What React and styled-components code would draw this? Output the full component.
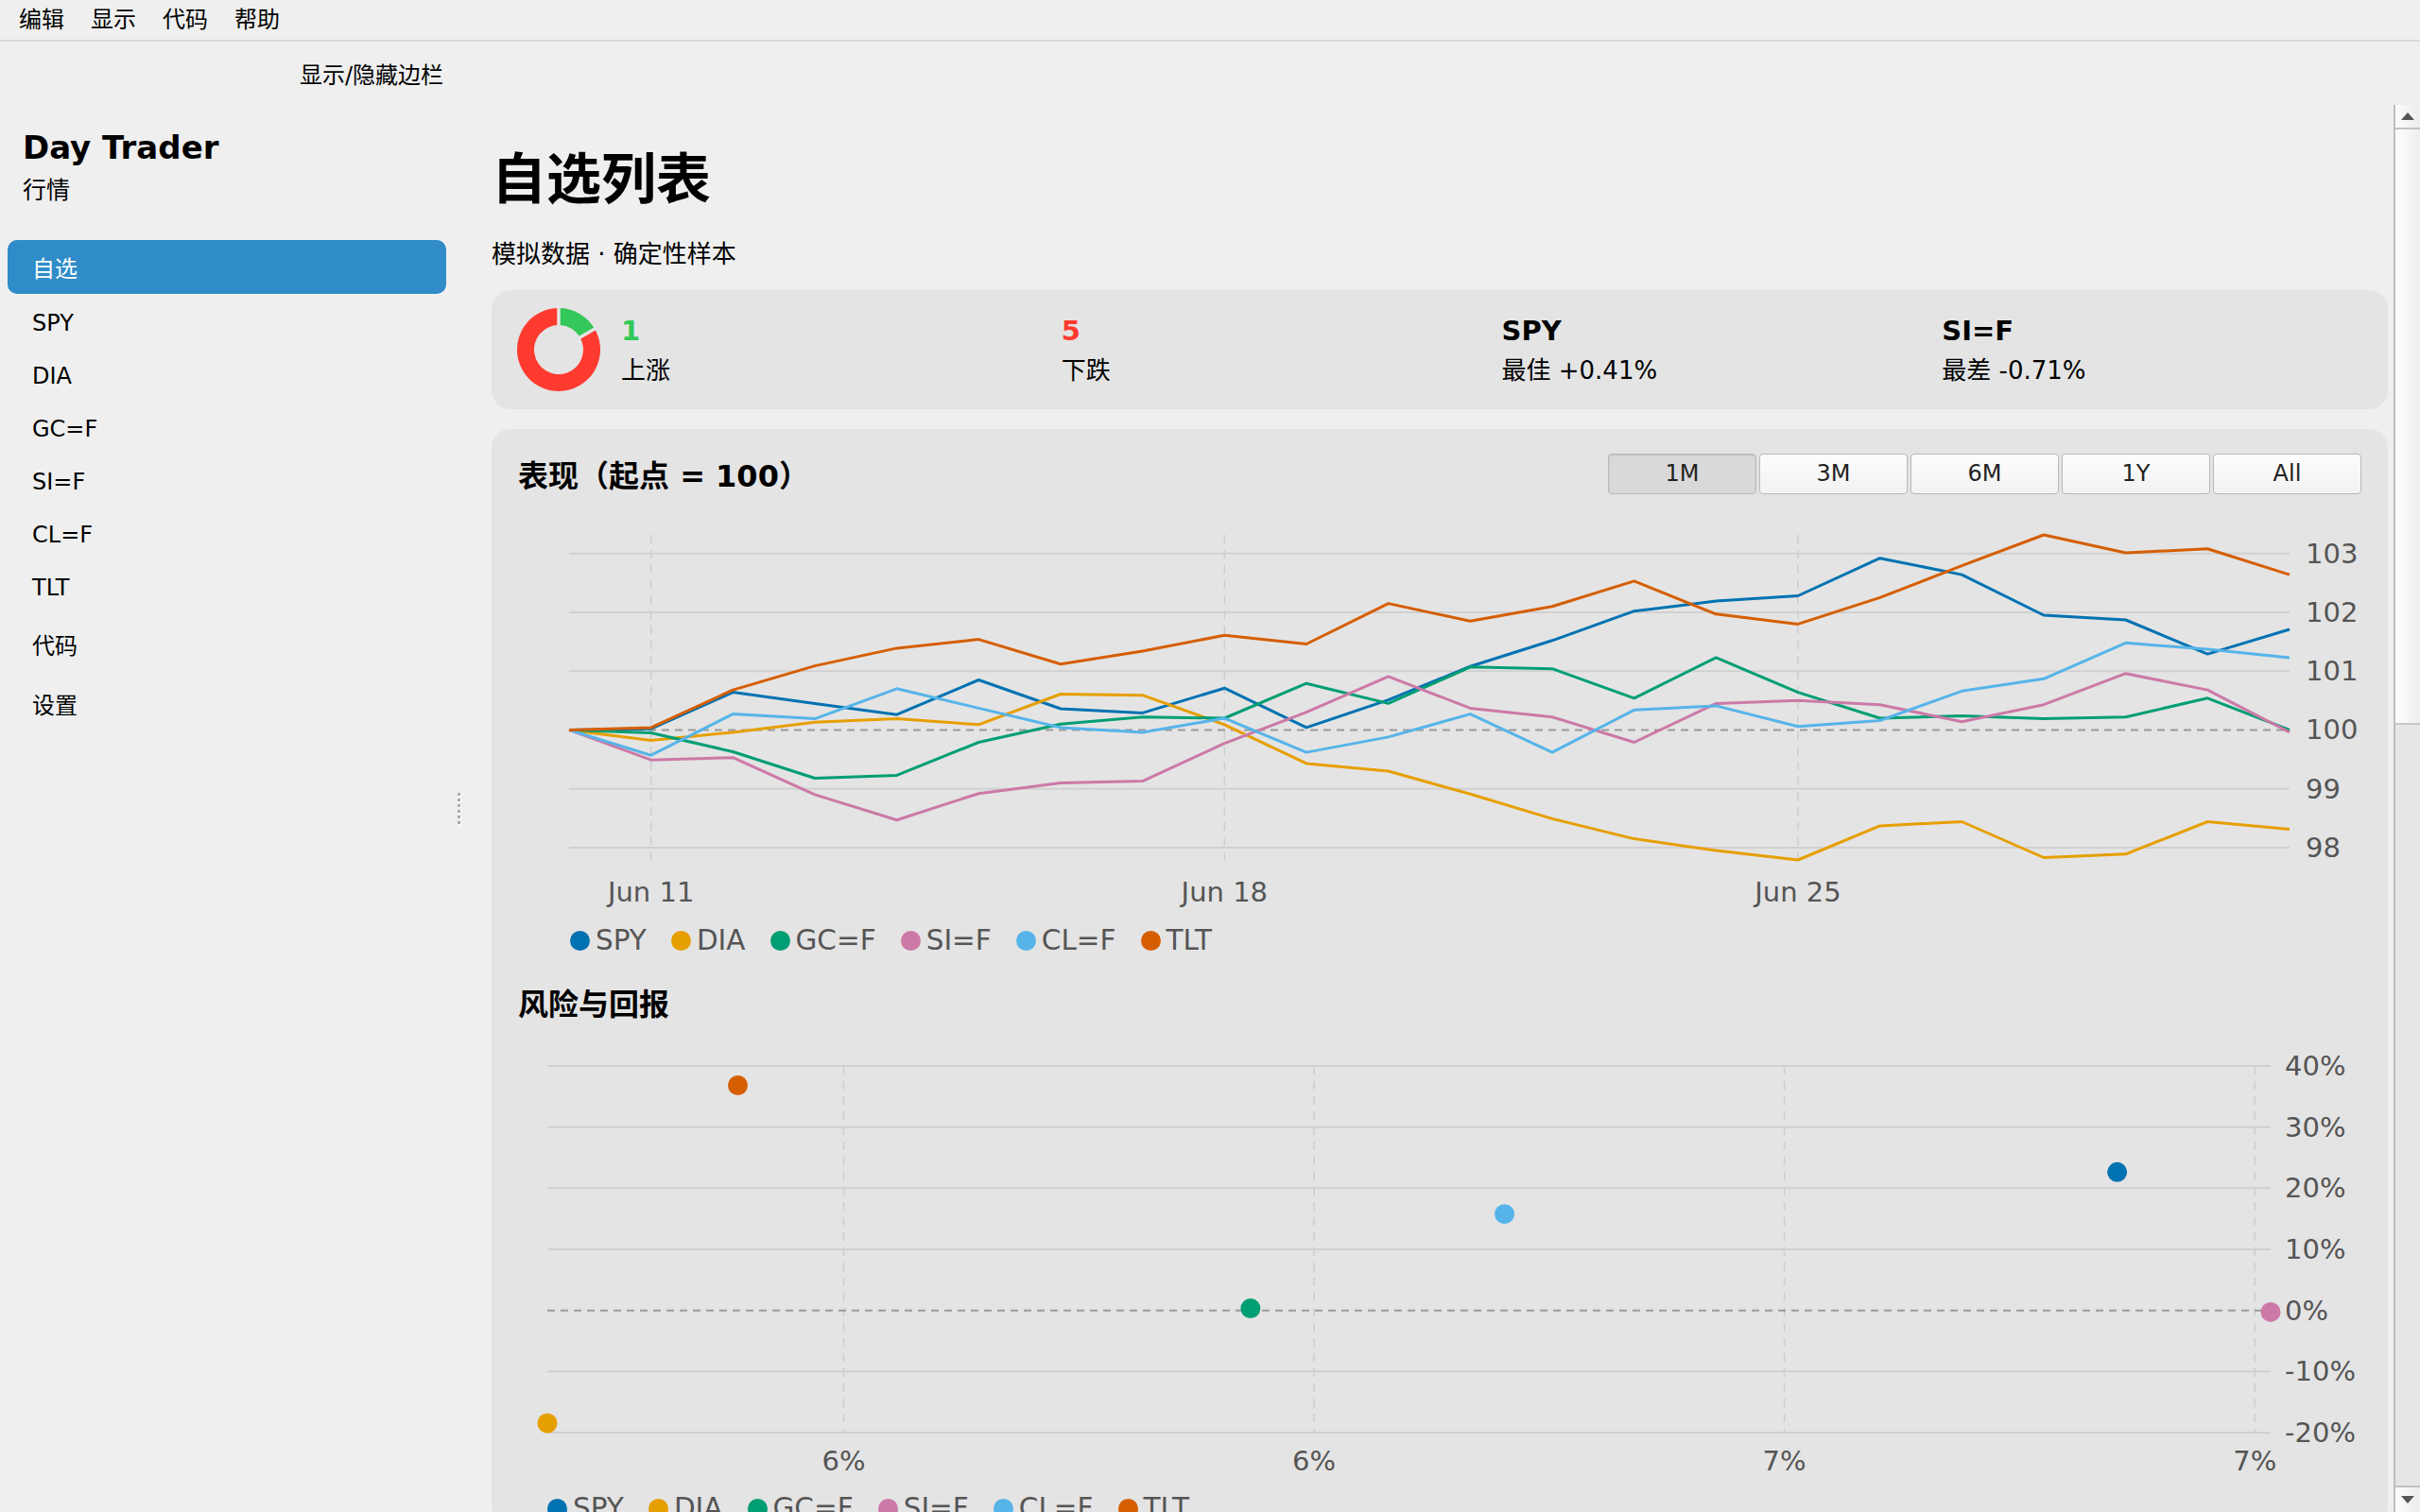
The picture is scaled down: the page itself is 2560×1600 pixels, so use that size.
import React from "react";
import styled, { createGlobalStyle } from "styled-components";

const FONT = `"DejaVu Sans", "Noto Sans CJK SC", sans-serif`;

const GlobalStyle = createGlobalStyle`
  * { box-sizing: border-box; }
  html, body { margin: 0; padding: 0; }
  body {
    background: #efefef;
    color: #000;
    font-family: ${FONT};
    overflow: hidden;
  }
`;

const SERIES = [
  {
    name: "SPY",
    color: "#0072b2",
    values: [100, 100.02, 100.64, 100.45, 100.26, 100.85, 100.36, 100.29, 100.71, 100.04, 100.51, 101.08, 101.52, 102.02, 102.19, 102.28, 102.92, 102.64, 101.95, 101.87, 101.29, 101.71],
  },
  {
    name: "DIA",
    color: "#e69f00",
    values: [100, 99.82, 99.96, 100.13, 100.19, 100.09, 100.61, 100.59, 100.09, 99.43, 99.3, 98.91, 98.49, 98.15, 97.95, 97.79, 98.37, 98.44, 97.83, 97.89, 98.44, 98.31],
  },
  {
    name: "GC=F",
    color: "#009e73",
    values: [100, 99.95, 99.63, 99.18, 99.23, 99.79, 100.1, 100.22, 100.2, 100.79, 100.45, 101.07, 101.04, 100.54, 101.23, 100.64, 100.2, 100.24, 100.19, 100.22, 100.54, 100.0],
  },
  {
    name: "SI=F",
    color: "#cc79a7",
    values: [100, 99.49, 99.53, 98.9, 98.47, 98.92, 99.1, 99.13, 99.77, 100.3, 100.91, 100.37, 100.22, 99.79, 100.45, 100.5, 100.43, 100.14, 100.43, 100.96, 100.68, 99.96],
  },
  {
    name: "CL=F",
    color: "#56b4e9",
    values: [100, 99.57, 100.27, 100.19, 100.7, 100.37, 100.04, 99.96, 100.2, 99.62, 99.88, 100.27, 99.62, 100.34, 100.41, 100.06, 100.16, 100.66, 100.87, 101.48, 101.37, 101.23],
  },
  {
    name: "TLT",
    color: "#d55e00",
    values: [100, 100.04, 100.68, 101.09, 101.39, 101.54, 101.12, 101.34, 101.61, 101.46, 102.15, 101.85, 102.1, 102.53, 101.97, 101.8, 102.25, 102.79, 103.316, 103.01, 103.08, 102.64],
  },
];

// annualised risk / return, in percent
const RISK = {
  SPY: { risk: 6.883, ret: 22.63 },
  DIA: { risk: 5.548, ret: -18.45 },
  "GC=F": { risk: 6.146, ret: 0.32 },
  "SI=F": { risk: 7.0135, ret: -0.27 },
  "CL=F": { risk: 6.362, ret: 15.77 },
  TLT: { risk: 5.71, ret: 36.83 },
};

const NAV = ["SPY", "DIA", "GC=F", "SI=F", "CL=F", "TLT", "代码", "设置"];
const RANGES = ["1M", "3M", "6M", "1Y", "All"];

/* ---------- shell ---------- */

const Shell = styled.div`
  height: 100vh;
  display: flex;
  flex-direction: column;
`;

const MenuBar = styled.div`
  height: 44px;
  flex: none;
  display: flex;
  align-items: center;
  padding-left: 6px;
  border-bottom: 2px solid #d8d8d8;
`;

const MenuItem = styled.span`
  padding: 0 14px;
  font-size: 24px;
  line-height: 42px;
`;

const ToolRow = styled.div`
  height: 67px;
  flex: none;
  display: flex;
  align-items: center;
`;

const ToggleButton = styled.button`
  width: 480px;
  padding: 0 11px 0 0;
  border: 0;
  background: transparent;
  font: 24px ${FONT};
  color: #000;
  text-align: right;
`;

const Body = styled.div`
  flex: 1;
  min-height: 0;
  display: flex;
`;

/* ---------- sidebar ---------- */

const Sidebar = styled.aside`
  width: 480px;
  flex: none;
  padding: 25px 8px 0;
`;

const Brand = styled.div`
  padding-left: 16px;
`;

const BrandName = styled.div`
  font-size: 34px;
  font-weight: bold;
`;

const BrandSub = styled.div`
  margin-top: 5px;
  font-size: 25px;
`;

const Nav = styled.nav`
  margin-top: 34px;
  display: flex;
  flex-direction: column;
`;

const NavItem = styled.div`
  margin: 3px 0;
  padding: 11px 26px;
  font-size: 24px;
  border-radius: 10px;
  color: ${(p) => (p.$active ? "#fff" : "#000")};
  background: ${(p) => (p.$active ? "#308cc8" : "transparent")};
`;

const Splitter = styled.div`
  width: 10px;
  flex: none;
  display: flex;
  flex-direction: column;
  align-items: center;
  justify-content: center;
  gap: 3px;
`;

const GripDot = styled.span`
  width: 3px;
  height: 3px;
  background: #aaa;
  box-shadow: 1px 1px 0 #fff;
`;

/* ---------- scrollbar ---------- */

const ScrollBar = styled.div`
  width: 28px;
  flex: none;
  display: flex;
  flex-direction: column;
  border-left: 2px solid #bdbdbd;
  background: #e6e6e6;
`;

const ScrollArrow = styled.div`
  height: ${(p) => (p.$down ? 28 : 26)}px;
  flex: none;
  display: flex;
  align-items: center;
  justify-content: center;
  background: linear-gradient(to right, #fcfcfc, #ececec);
  border-top: ${(p) => (p.$down ? "2px solid #c2c2c2" : "0")};
  border-bottom: ${(p) => (p.$down ? "0" : "2px solid #c2c2c2")};

  &::after {
    content: "";
    border-left: 7px solid transparent;
    border-right: 7px solid transparent;
    border-bottom: ${(p) => (p.$down ? "0" : "8px solid #555")};
    border-top: ${(p) => (p.$down ? "8px solid #555" : "0")};
  }
`;

const ScrollThumb = styled.div`
  height: 630px;
  flex: none;
  background: linear-gradient(to right, #fefefe, #ededed);
  border-bottom: 2px solid #c8c8c8;
`;

const ScrollTrack = styled.div`
  flex: 1;
`;

/* ---------- main ---------- */

const Main = styled.main`
  flex: 1;
  min-width: 0;
  overflow: hidden;
  padding: 32px 6px 0 30px;
`;

const PageTitle = styled.h1`
  margin: 0;
  font-size: 58px;
  font-weight: bold;
  line-height: normal;
`;

const Subtitle = styled.div`
  margin-top: 21px;
  font-size: 26px;
`;

const Card = styled.section`
  margin-top: ${(p) => p.$top}px;
  background: #e4e4e4;
  border-radius: 20px;
`;

const SummaryCard = styled(Card)`
  height: 126px;
  display: flex;
  align-items: center;
  gap: 22px;
  padding: 0 6px 0 27px;
`;

const StatGrid = styled.div`
  flex: 1;
  display: grid;
  grid-template-columns: repeat(4, 1fr);
`;

const Stat = styled.div`
  display: flex;
  flex-direction: column;
  gap: 4px;
`;

const StatValue = styled.div`
  font-size: 29px;
  font-weight: bold;
  color: ${(p) => p.$color || "#000"};
`;

const StatLabel = styled.div`
  font-size: 26px;
`;

const ChartCard = styled(Card)`
  padding: 24px 28px 0;
`;

const CardHeader = styled.div`
  display: flex;
  align-items: center;
  justify-content: space-between;
`;

const SectionTitle = styled.h2`
  margin: ${(p) => p.$top || 0}px 0 0;
  font-size: 32px;
  font-weight: bold;
  line-height: normal;
`;

const RangeGroup = styled.div`
  display: flex;
  gap: 3px;
`;

const RangeButton = styled.button`
  width: 157px;
  height: 43px;
  padding: 0;
  font: 24px ${FONT};
  color: #222;
  border: 1.5px solid #b8b8b8;
  border-radius: 4px;
  background: ${(p) => (p.$active ? "#d9d9d9" : "linear-gradient(#fdfdfd, #f2f2f2)")};
  box-shadow: ${(p) => (p.$active ? "inset 0 1px 2px rgba(0,0,0,0.12)" : "none")};
`;

const ChartSvg = styled.svg`
  display: block;
  width: 100%;
  margin-top: ${(p) => p.$top}px;
  font-family: ${FONT};

  text {
    fill: #555;
    font-size: 29px;
  }
`;

const Legend = styled.div`
  display: flex;
  align-items: center;
  gap: 26px;
  margin-top: ${(p) => p.$top}px;
  padding-left: ${(p) => p.$indent}px;
  font-size: 29.5px;
  color: #555;
`;

const LegendItem = styled.span`
  display: inline-flex;
  align-items: center;
  gap: 6px;
`;

const LegendDot = styled.span`
  width: 21px;
  height: 21px;
  border-radius: 50%;
  background: ${(p) => p.$color};
`;

/* ---------- drawings ---------- */

function Donut({ up, down }) {
  const c = 44;
  const R = 44;
  const r = 26;
  const split = (up / (up + down)) * 360;
  const pt = (deg, rad) => {
    const t = (deg * Math.PI) / 180;
    return `${(c + rad * Math.sin(t)).toFixed(2)} ${(c - rad * Math.cos(t)).toFixed(2)}`;
  };
  const sector = (a0, a1) => {
    const large = a1 - a0 > 180 ? 1 : 0;
    return `M ${pt(a0, R)} A ${R} ${R} 0 ${large} 1 ${pt(a1, R)} L ${pt(a1, r)} A ${r} ${r} 0 ${large} 0 ${pt(a0, r)} Z`;
  };
  return (
    <svg width="88" height="88" viewBox="0 0 88 88">
      <path d={sector(0, split)} fill="#34c759" />
      <path d={sector(split, 359.99)} fill="#ff3b30" />
      {[0, split].map((a) => {
        const t = (a * Math.PI) / 180;
        return (
          <line
            key={a}
            x1={c}
            y1={c}
            x2={c + 46 * Math.sin(t)}
            y2={c - 46 * Math.cos(t)}
            stroke="#e4e4e4"
            strokeWidth="3.5"
          />
        );
      })}
    </svg>
  );
}

function LineChart() {
  const left = 54;
  const right = 1874;
  const top = 36;
  const bottom = 380;
  const all = SERIES.flatMap((s) => s.values);
  const min = Math.min(...all);
  const max = Math.max(...all);
  const n = SERIES[0].values.length - 1;
  const x = (i) => left + (i * (right - left)) / n;
  const y = (v) => top + ((max - v) / (max - min)) * (bottom - top);
  const ticks = [98, 99, 100, 101, 102, 103];
  const dates = [
    [1, "Jun 11"],
    [8, "Jun 18"],
    [15, "Jun 25"],
  ];

  return (
    <ChartSvg $top={6} viewBox="0 0 1950 440">
      {dates.map(([i]) => (
        <line key={i} x1={x(i)} x2={x(i)} y1={top} y2={bottom} stroke="#cdcdcd" strokeWidth="1.5" strokeDasharray="9 7" />
      ))}
      {ticks.map((t) => (
        <g key={t}>
          <line
            x1={left}
            x2={right}
            y1={y(t)}
            y2={y(t)}
            stroke={t === 100 ? "#9a9a9a" : "#d0d0d0"}
            strokeWidth="2"
            strokeDasharray={t === 100 ? "8 6" : undefined}
          />
          <text x={1891} y={y(t)} dominantBaseline="central">
            {t}
          </text>
        </g>
      ))}
      {SERIES.map((s) => (
        <polyline
          key={s.name}
          fill="none"
          stroke={s.color}
          strokeWidth="3"
          strokeLinejoin="round"
          points={s.values.map((v, i) => `${x(i).toFixed(1)},${y(v).toFixed(1)}`).join(" ")}
        />
      ))}
      {dates.map(([i, label]) => (
        <text key={label} x={x(i)} y={414} textAnchor="middle" dominantBaseline="central">
          {label}
        </text>
      ))}
    </ChartSvg>
  );
}

function ScatterChart() {
  const left = 31;
  const right = 1854;
  const top = 33;
  const bottom = 421;
  const risks = SERIES.map((s) => RISK[s.name].risk);
  const rMin = Math.min(...risks);
  const rMax = Math.max(...risks);
  const x = (r) => left + ((r - rMin) / (rMax - rMin)) * (right - left);
  const y = (p) => top + ((40 - p) / 60) * (bottom - top);
  const yTicks = [40, 30, 20, 10, 0, -10, -20];
  const xTicks = [5.8, 6.2, 6.6, 7.0];

  return (
    <ChartSvg $top={12} viewBox="0 0 1950 475">
      {xTicks.map((t) => (
        <line key={t} x1={x(t)} x2={x(t)} y1={top} y2={bottom} stroke="#cdcdcd" strokeWidth="1.5" strokeDasharray="9 7" />
      ))}
      {yTicks.map((t) => (
        <g key={t}>
          <line
            x1={left}
            x2={right}
            y1={y(t)}
            y2={y(t)}
            stroke={t === 0 ? "#9a9a9a" : "#d0d0d0"}
            strokeWidth="2"
            strokeDasharray={t === 0 ? "8 6" : undefined}
          />
          <text x={1869} y={y(t)} dominantBaseline="central">
            {t}%
          </text>
        </g>
      ))}
      {xTicks.map((t) => (
        <text key={t} x={x(t)} y={451} textAnchor="middle" dominantBaseline="central">
          {t.toFixed(0)}%
        </text>
      ))}
      {SERIES.map((s) => (
        <circle key={s.name} cx={x(RISK[s.name].risk)} cy={y(RISK[s.name].ret)} r="10.5" fill={s.color} />
      ))}
    </ChartSvg>
  );
}

function SeriesLegend({ top, indent }) {
  return (
    <Legend $top={top} $indent={indent}>
      {SERIES.map((s) => (
        <LegendItem key={s.name}>
          <LegendDot $color={s.color} />
          {s.name}
        </LegendItem>
      ))}
    </Legend>
  );
}

export default function App() {
  return (
    <Shell>
      <GlobalStyle />
      <MenuBar>
        <MenuItem>编辑</MenuItem>
        <MenuItem>显示</MenuItem>
        <MenuItem>代码</MenuItem>
        <MenuItem>帮助</MenuItem>
      </MenuBar>
      <ToolRow>
        <ToggleButton>显示/隐藏边栏</ToggleButton>
      </ToolRow>
      <Body>
        <Sidebar>
          <Brand>
            <BrandName>Day Trader</BrandName>
            <BrandSub>行情</BrandSub>
          </Brand>
          <Nav>
            <NavItem $active>自选</NavItem>
            {NAV.map((item) => (
              <NavItem key={item}>{item}</NavItem>
            ))}
          </Nav>
        </Sidebar>
        <Splitter>
          {Array.from({ length: 6 }).map((_, i) => (
            <GripDot key={i} />
          ))}
        </Splitter>
        <Main>
          <PageTitle>自选列表</PageTitle>
          <Subtitle>模拟数据 · 确定性样本</Subtitle>

          <SummaryCard $top={22}>
            <Donut up={1} down={5} />
            <StatGrid>
              <Stat>
                <StatValue $color="#34c759">1</StatValue>
                <StatLabel>上涨</StatLabel>
              </Stat>
              <Stat>
                <StatValue $color="#ff3b30">5</StatValue>
                <StatLabel>下跌</StatLabel>
              </Stat>
              <Stat>
                <StatValue>SPY</StatValue>
                <StatLabel>最佳 +0.41%</StatLabel>
              </Stat>
              <Stat>
                <StatValue>SI=F</StatValue>
                <StatLabel>最差 -0.71%</StatLabel>
              </Stat>
            </StatGrid>
          </SummaryCard>

          <ChartCard $top={21}>
            <CardHeader>
              <SectionTitle>表现（起点 = 100）</SectionTitle>
              <RangeGroup>
                {RANGES.map((r) => (
                  <RangeButton key={r} $active={r === "1M"}>
                    {r}
                  </RangeButton>
                ))}
              </RangeGroup>
            </CardHeader>
            <LineChart />
            <SeriesLegend top={8} indent={55} />

            <SectionTitle $top={25}>风险与回报</SectionTitle>
            <ScatterChart />
            <SeriesLegend top={9} indent={31} />
          </ChartCard>
        </Main>
        <ScrollBar>
          <ScrollArrow />
          <ScrollThumb />
          <ScrollTrack />
          <ScrollArrow $down />
        </ScrollBar>
      </Body>
    </Shell>
  );
}
